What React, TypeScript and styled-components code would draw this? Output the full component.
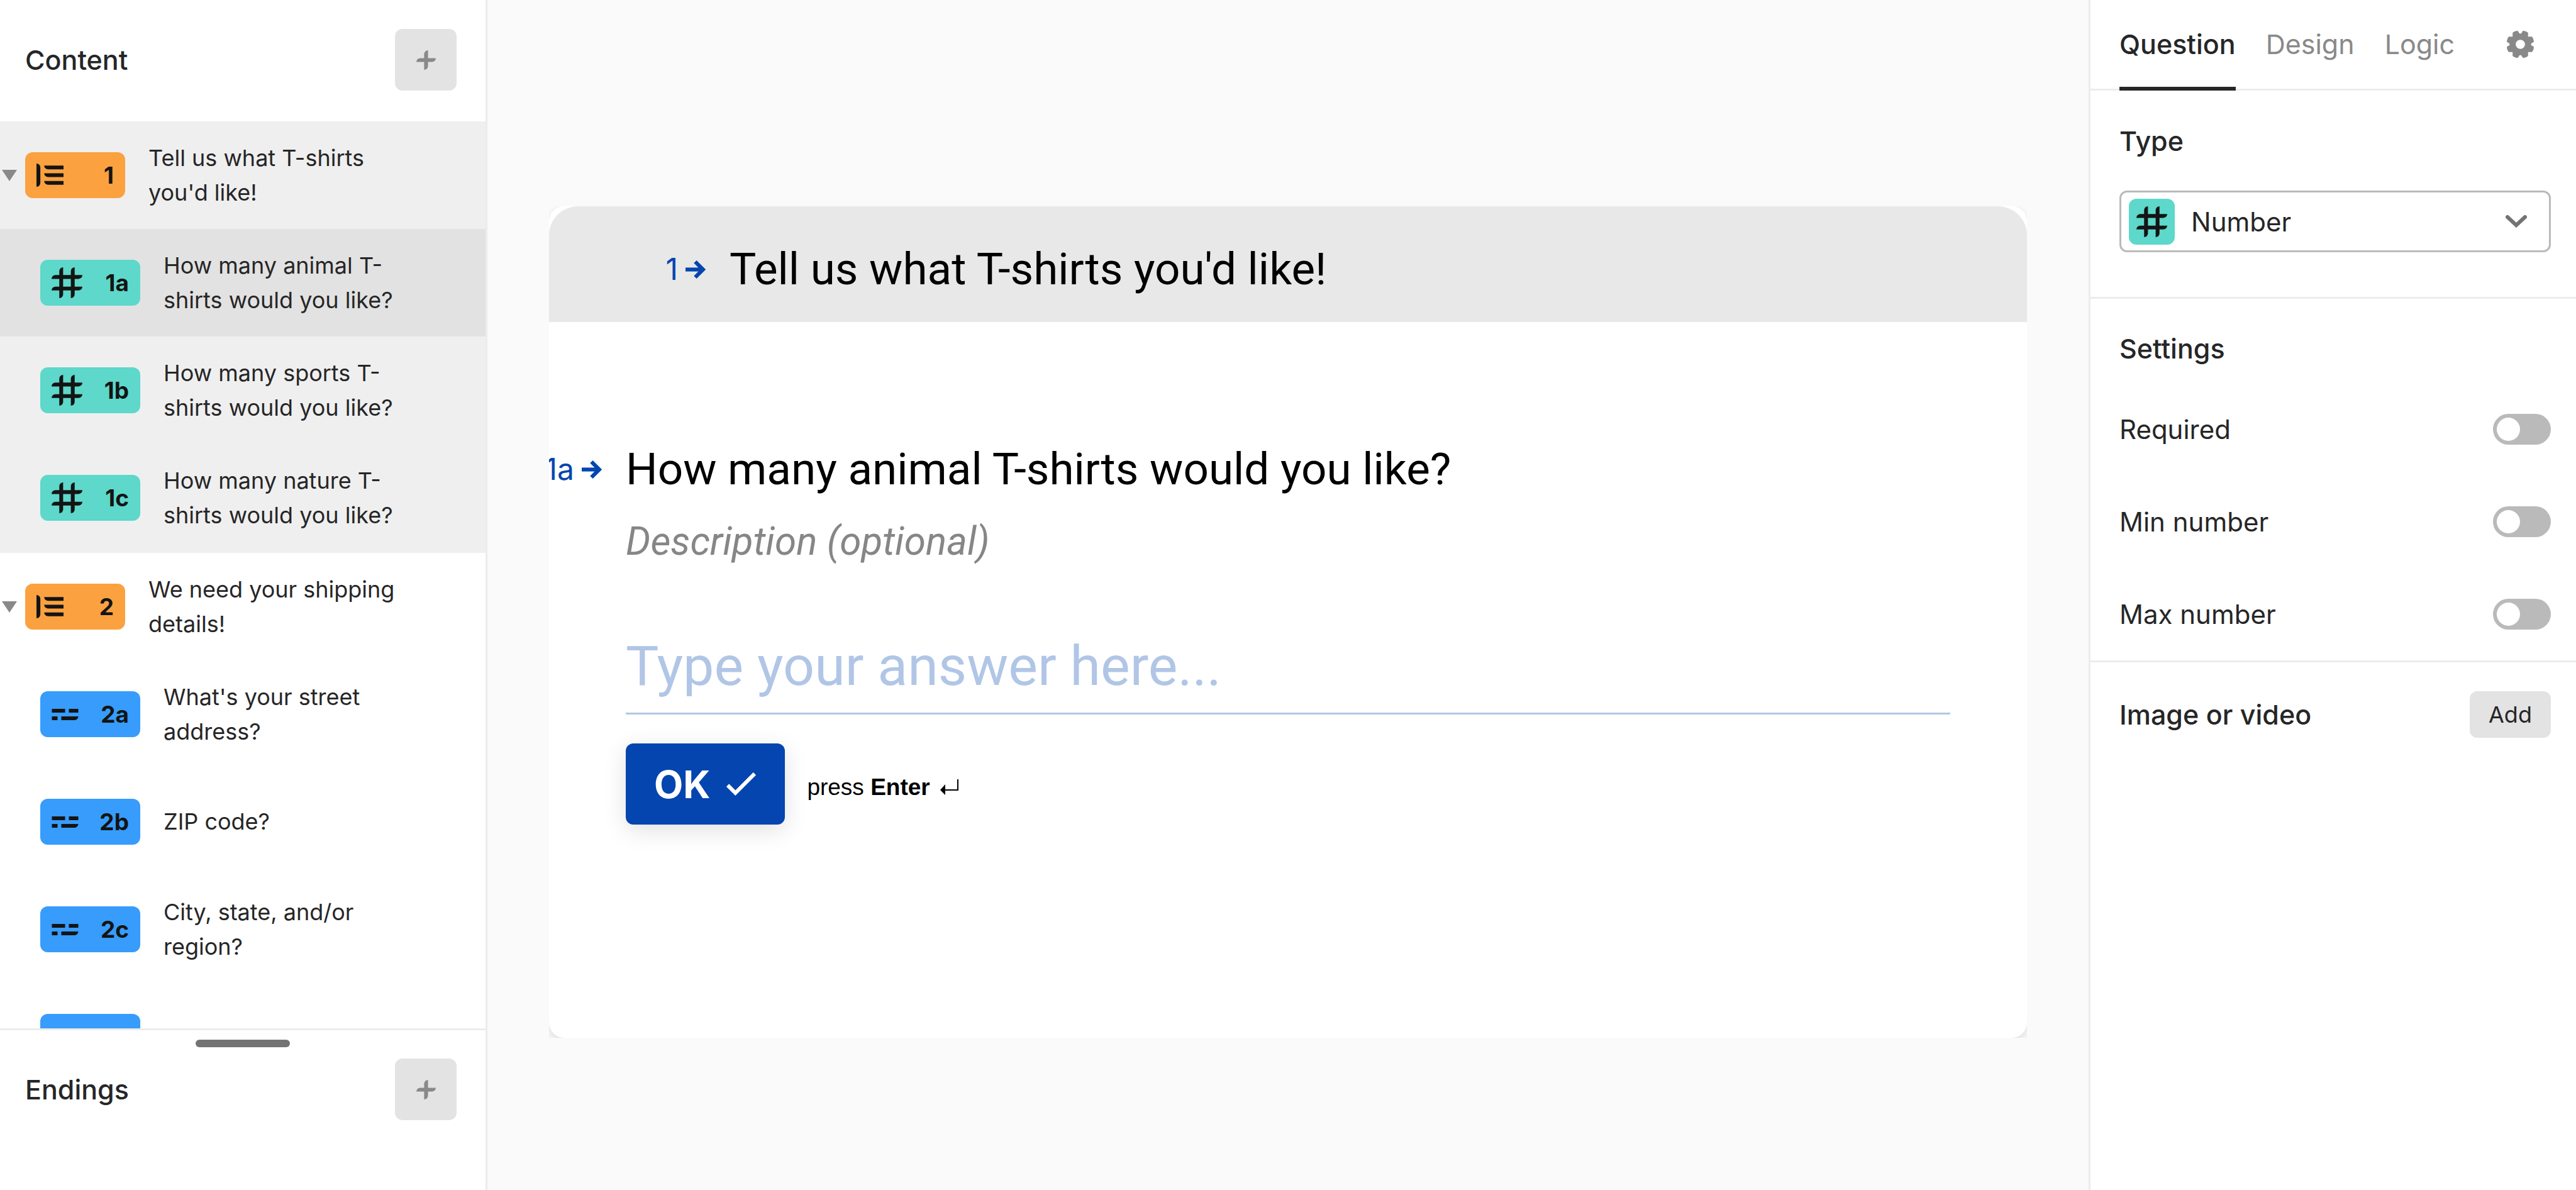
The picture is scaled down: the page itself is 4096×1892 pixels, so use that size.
import React from "react";
import styled, { createGlobalStyle } from "styled-components";

const sans = `Inter, "Liberation Sans", Arial, sans-serif`;
const display = `Roboto, Inter, "Liberation Sans", Arial, sans-serif`;
const ink = "#262627";
const muted = "#898989";
const line = "#ececec";
const brand = "#0445af";

const GlobalStyle = createGlobalStyle`
  *, *::before, *::after { box-sizing: border-box; }
  body { margin: 0; background: #fafafa; color: ${ink}; font-family: ${sans}; }
  button, input, select { font-family: inherit; color: inherit; margin: 0; }
  button { cursor: pointer; }
  h1, h2, h3, p, ul { margin: 0; padding: 0; }
  ul { list-style: none; }
  svg { display: block; flex: none; }
`;

/* ---------- icons ---------- */

const HashIcon = () => (
  <svg width="49" height="49" viewBox="0 0 16 16" fill="#141414" aria-hidden="true">
    <path d="M4 2a2 2 0 0 1 2-2v14a2 2 0 0 1-2 2z" />
    <path d="M10 2a2 2 0 0 1 2-2v14a2 2 0 0 1-2 2z" />
    <path d="M2 4h14a2 2 0 0 1-2 2H0a2 2 0 0 1 2-2z" />
    <path d="M2 10h14a2 2 0 0 1-2 2H0a2 2 0 0 1 2-2z" />
  </svg>
);

const GroupIcon = () => (
  <svg width="43" height="37" viewBox="0 0 14 12" fill="#141414" aria-hidden="true">
    <path d="M0 0a2 2 0 0 1 2 2v8a2 2 0 0 1-2 2z" />
    <path d="M4 1h10v2H6a2 2 0 0 1-2-2zM4 5h10v2H6a2 2 0 0 1-2-2zM4 9h10v2H6a2 2 0 0 1-2-2z" />
  </svg>
);

const ShortTextIcon = () => (
  <svg width="43" height="18" viewBox="0 0 14 6" fill="#141414" aria-hidden="true">
    <path d="M0 0h7v2H0zM9 0h5v2H9zM0 4h3v2H0zM5 4h9a2 2 0 0 1-2 2H5z" />
  </svg>
);

const PlusIcon = () => (
  <svg width="31" height="31" viewBox="0 0 10 10" fill={muted} aria-hidden="true">
    <path d="M4 2a2 2 0 0 1 2-2v8a2 2 0 0 1-2 2z" />
    <path d="M2 4h8a2 2 0 0 1-2 2H0a2 2 0 0 1 2-2z" />
  </svg>
);

const TriangleIcon = () => (
  <svg width="24" height="18" viewBox="0 0 8 6" fill={muted} aria-hidden="true">
    <path d="M0 0h8L4 6z" />
  </svg>
);

const ArrowIcon = () => (
  <svg width="34" height="31" viewBox="0 0 11 10" fill={brand} aria-hidden="true">
    <path d="M7.586 5L4.293 1.707 5.707.293 10.414 5 5.707 9.707 4.293 8.293z" />
    <path d="M8 4v2H0V4z" />
  </svg>
);

const CheckIcon = () => (
  <svg width="49" height="40" viewBox="0 0 16 13" fill="#fff" aria-hidden="true">
    <path d="M14.293.293l1.414 1.414L5 12.414.293 7.707l1.414-1.414L5 9.586z" />
  </svg>
);

const EnterIcon = () => (
  <svg width="29" height="25" viewBox="0 0 29 25" fill="#000" aria-hidden="true">
    <path d="M27 0h2v18H7v-2h20z" />
    <path d="M0 17l8-9v17z" />
  </svg>
);

const ChevronIcon = () => (
  <svg width="34" height="20" viewBox="0 0 34 20" fill="none" stroke="#737373" strokeWidth="6" strokeLinecap="round" aria-hidden="true">
    <path d="M3 3l14 13L31 3" />
  </svg>
);

const GearIcon = () => (
  <svg width="43" height="43" viewBox="-7 -7 14 14" fill={muted} fillRule="evenodd" aria-hidden="true">
    <path d="M0-5.5Q.8-5.6 1-6.6 1.1-7 1.8-7 3.1-6.8 4-6V-4H6Q6.8-3.1 7-1.8 7-1.1 6.6-1 5.6-.8 5.5 0 5.6.8 6.6 1 7 1.1 7 1.8 6.8 3.1 6 4H4V6Q3.1 6.8 1.8 7 1.1 7 1 6.6.8 5.6 0 5.5-.8 5.6-1 6.6-1.1 7-1.8 7-3.1 6.8-4 6V4H-6Q-6.8 3.1-7 1.8-7 1.1-6.6 1-5.6.8-5.5 0-5.6-.8-6.6-1-7-1.1-7-1.8-6.8-3.1-6-4H-4V-6Q-3.1-6.8-1.8-7-1.1-7-1-6.6-.8-5.6 0-5.5ZM0-2.4a2.4 2.4 0 1 0 0 4.8 2.4 2.4 0 0 0 0-4.8Z" />
  </svg>
);

/* ---------- shell ---------- */

const Shell = styled.div`
  display: grid;
  grid-template-columns: 775px minmax(0, 1fr) 775px;
  height: 100vh;
`;

/* ---------- left column ---------- */

const Sidebar = styled.aside`
  display: flex;
  flex-direction: column;
  min-height: 0;
  background: #fff;
  border-right: 3px solid ${line};
`;

const SidebarBar = styled.div`
  display: flex;
  align-items: center;
  justify-content: space-between;
  padding: 0 46px 0 40px;
`;

const SidebarHeader = styled.header`
  padding: 46px 0 49px;
`;

const Heading = styled.h2`
  font-size: 43px;
  line-height: 52px;
  font-weight: 500;
`;

const AddButton = styled.button`
  display: grid;
  place-items: center;
  width: 98px;
  height: 98px;
  padding: 0;
  border: 0;
  border-radius: 12px;
  background: #e3e3e3;
`;

const Outline = styled.div`
  flex: 1;
  min-height: 0;
  overflow: hidden;
`;

const Group = styled.ul<{ $active?: boolean }>`
  padding-bottom: 2px;
  background: ${(p) => (p.$active ? "#efefef" : "#fff")};
`;

const Row = styled.li<{ $nested?: boolean; $selected?: boolean }>`
  display: flex;
  align-items: center;
  gap: 13px;
  height: 171px;
  padding: 0 116px 0 ${(p) => (p.$nested ? 64 : 3)}px;
  background: ${(p) => (p.$selected ? "#e2e2e2" : "transparent")};
`;

const CollapseButton = styled.button`
  flex: none;
  padding: 0;
  border: 0;
  background: none;
`;

const RowButton = styled.button`
  display: flex;
  align-items: center;
  gap: 37px;
  flex: 1;
  min-width: 0;
  padding: 0;
  border: 0;
  background: none;
  text-align: left;
`;

const tones = { group: "#fba140", number: "#5dd8ca", text: "#379cfb" };
type Tone = keyof typeof tones;

const Badge = styled.span<{ $tone: Tone }>`
  display: flex;
  align-items: center;
  justify-content: space-between;
  flex: none;
  width: 159px;
  height: 73px;
  padding: 0 18px;
  border-radius: 12px;
  background: ${(p) => tones[p.$tone]};
  color: #141414;
  font-size: 37px;
  font-weight: 700;
`;

const RowText = styled.span`
  font-size: 36px;
  line-height: 55px;
`;

const SidebarFooter = styled.footer`
  display: flex;
  flex-direction: column;
  gap: 18px;
  padding: 15px 0 111px;
  border-top: 3px solid ${line};
`;

const Handle = styled.div`
  align-self: center;
  width: 150px;
  height: 12px;
  border-radius: 6px;
  background: #737373;
`;

/* ---------- preview ---------- */

const Canvas = styled.main`
  display: flex;
  min-width: 0;
  padding: 328px 98px 242px;
`;

const CardFrame = styled.section`
  display: flex;
  flex: 1;
  min-width: 0;
  overflow: hidden;
`;

const Card = styled.div`
  flex: 1;
  min-width: 0;
  border-radius: 24px;
  background: #fff;
  box-shadow: 0 6px 16px rgba(0, 0, 0, 0.12);
`;

const GroupBanner = styled.header`
  display: grid;
  grid-template-columns: 251px minmax(0, 1fr);
  column-gap: 36px;
  align-items: center;
  height: 184px;
  padding-top: 16px;
  border-radius: 46px 46px 0 0;
  background: #e8e8e8;
`;

const QuestionBody = styled.div`
  display: grid;
  grid-template-columns: 86px minmax(0, 1fr);
  column-gap: 36px;
  padding: 186px 122px 0 0;
`;

const Marker = styled.span`
  display: flex;
  align-items: center;
  justify-content: flex-end;
  gap: 12px;
  color: ${brand};
  font-size: 48px;
  line-height: 96px;
`;

const Title = styled.h1`
  color: #000;
  font-family: ${display};
  font-size: 71px;
  line-height: 96px;
  font-weight: 400;
  white-space: nowrap;
`;

const AnswerForm = styled.form`
  grid-column: 2;
  display: flex;
  flex-direction: column;
`;

const DescriptionInput = styled.input`
  width: 100%;
  height: 80px;
  margin-top: 26px;
  padding: 0;
  border: 0;
  background: none;
  font-family: ${display};
  font-size: 62px;
  font-style: italic;

  &::placeholder { color: #868686; opacity: 1; }
`;

const AnswerInput = styled.input`
  width: 100%;
  height: 137px;
  margin-top: 99px;
  padding: 0 0 16px;
  border: 0;
  border-bottom: 3px solid #b1c6e6;
  background: none;
  font-family: ${display};
  font-size: 88px;

  &::placeholder { color: #b1c6e6; opacity: 1; }
`;

const SubmitRow = styled.div`
  display: flex;
  align-items: center;
  gap: 35px;
  margin-top: 46px;
`;

const OkButton = styled.button`
  display: flex;
  align-items: center;
  justify-content: center;
  gap: 25px;
  height: 129px;
  padding: 0 45px;
  border: 0;
  border-radius: 12px;
  background: ${brand};
  box-shadow: 0 9px 37px rgba(0, 0, 0, 0.12);
  color: #fff;
  font-size: 60px;
  font-weight: 700;
`;

const Hint = styled.p`
  display: flex;
  align-items: center;
  gap: 16px;
  padding-top: 10px;
  color: #000;
  font-family: "Liberation Sans", Arial, sans-serif;
  font-size: 37px;
`;

/* ---------- right column ---------- */

const Panel = styled.aside`
  background: #fff;
  border-left: 3px solid ${line};
`;

const Tabs = styled.nav`
  display: flex;
  align-items: stretch;
  gap: 48px;
  height: 144px;
  padding: 0 67px 0 46px;
  box-shadow: inset 0 -3px ${line};
`;

const Tab = styled.a<{ $active?: boolean }>`
  display: flex;
  align-items: center;
  padding-bottom: 4px;
  box-shadow: ${(p) => (p.$active ? `inset 0 -6px ${ink}` : "none")};
  color: ${(p) => (p.$active ? ink : muted)};
  font-size: 43px;
  font-weight: ${(p) => (p.$active ? 500 : 400)};
  text-decoration: none;
`;

const SettingsButton = styled.button`
  margin-left: auto;
  padding: 0 0 4px;
  border: 0;
  background: none;
`;

const Section = styled.section<{ $top: number; $bottom: number; $last?: boolean }>`
  padding: ${(p) => p.$top}px 40px ${(p) => p.$bottom}px 46px;
  border-bottom: ${(p) => (p.$last ? "0" : `3px solid ${line}`)};
`;

const SelectBox = styled.div`
  display: flex;
  align-items: center;
  gap: 26px;
  height: 98px;
  margin-top: 53px;
  padding: 0 35px 0 12px;
  border: 3px solid #bababa;
  border-radius: 12px;
`;

const TypeSwatch = styled.span`
  display: grid;
  place-items: center;
  width: 73px;
  height: 73px;
  border-radius: 12px;
  background: ${tones.number};
`;

const TypeSelect = styled.select`
  flex: 1;
  height: 92px;
  padding: 0;
  border: 0;
  background: none;
  appearance: none;
  font-size: 42px;
`;

const SwitchList = styled.div`
  margin-top: 29px;
`;

const SwitchRow = styled.label`
  display: flex;
  align-items: center;
  justify-content: space-between;
  height: 147px;
  font-size: 42px;
`;

const Switch = styled.input`
  appearance: none;
  display: flex;
  align-items: center;
  width: 92px;
  height: 49px;
  padding: 0 6px;
  border-radius: 25px;
  background: #bababa;

  &::before {
    content: "";
    width: 37px;
    height: 37px;
    border-radius: 50%;
    background: #fff;
  }

  &:checked { justify-content: flex-end; background: ${ink}; }
`;

const MediaRow = styled.div`
  display: flex;
  align-items: center;
  justify-content: space-between;
`;

const MediaButton = styled.button`
  width: 129px;
  height: 74px;
  padding: 0;
  border: 0;
  border-radius: 12px;
  background: #e3e3e3;
  font-size: 36px;
`;

/* ---------- data ---------- */

type Entry = { no: string; tone: Tone; text: string; selected?: boolean };

const groups: { active?: boolean; entries: Entry[] }[] = [
  {
    active: true,
    entries: [
      { no: "1", tone: "group", text: "Tell us what T-shirts you'd like!" },
      { no: "1a", tone: "number", text: "How many animal T-shirts would you like?", selected: true },
      { no: "1b", tone: "number", text: "How many sports T-shirts would you like?" },
      { no: "1c", tone: "number", text: "How many nature T-shirts would you like?" },
    ],
  },
  {
    entries: [
      { no: "2", tone: "group", text: "We need your shipping details!" },
      { no: "2a", tone: "text", text: "What's your street address?" },
      { no: "2b", tone: "text", text: "ZIP code?" },
      { no: "2c", tone: "text", text: "City, state, and/or region?" },
      { no: "", tone: "text", text: "" },
    ],
  },
];

const icons = { group: GroupIcon, number: HashIcon, text: ShortTextIcon };

const OutlineRow = ({ no, tone, text, selected }: Entry) => {
  const Icon = icons[tone];
  const nested = tone !== "group";
  return (
    <Row $nested={nested} $selected={selected}>
      {!nested && (
        <CollapseButton aria-label="Collapse group">
          <TriangleIcon />
        </CollapseButton>
      )}
      <RowButton>
        <Badge $tone={tone}>
          <Icon />
          {no}
        </Badge>
        <RowText>{text}</RowText>
      </RowButton>
    </Row>
  );
};

export default function App() {
  return (
    <>
      <GlobalStyle />
      <Shell>
        <Sidebar>
          <SidebarHeader>
            <SidebarBar>
              <Heading>Content</Heading>
              <AddButton aria-label="Add content">
                <PlusIcon />
              </AddButton>
            </SidebarBar>
          </SidebarHeader>
          <Outline>
            {groups.map((group, i) => (
              <Group key={i} $active={group.active}>
                {group.entries.map((entry, j) => (
                  <OutlineRow key={j} {...entry} />
                ))}
              </Group>
            ))}
          </Outline>
          <SidebarFooter>
            <Handle />
            <SidebarBar>
              <Heading>Endings</Heading>
              <AddButton aria-label="Add ending">
                <PlusIcon />
              </AddButton>
            </SidebarBar>
          </SidebarFooter>
        </Sidebar>

        <Canvas>
          <CardFrame>
            <Card>
              <GroupBanner>
                <Marker>
                  1<ArrowIcon />
                </Marker>
                <Title>Tell us what T-shirts you'd like!</Title>
              </GroupBanner>
              <QuestionBody>
                <Marker>
                  1a
                  <ArrowIcon />
                </Marker>
                <Title>How many animal T-shirts would you like?</Title>
                <AnswerForm onSubmit={(e) => e.preventDefault()}>
                  <DescriptionInput aria-label="Description" placeholder="Description (optional)" />
                  <AnswerInput aria-label="Answer" placeholder="Type your answer here..." />
                  <SubmitRow>
                    <OkButton type="submit">
                      OK
                      <CheckIcon />
                    </OkButton>
                    <Hint>
                      <span>
                        press <strong>Enter</strong>
                      </span>
                      <EnterIcon />
                    </Hint>
                  </SubmitRow>
                </AnswerForm>
              </QuestionBody>
            </Card>
          </CardFrame>
        </Canvas>

        <Panel>
          <Tabs>
            <Tab href="#question" $active>
              Question
            </Tab>
            <Tab href="#design">Design</Tab>
            <Tab href="#logic">Logic</Tab>
            <SettingsButton aria-label="Settings">
              <GearIcon />
            </SettingsButton>
          </Tabs>
          <Section $top={54} $bottom={71}>
            <Heading as="label" htmlFor="type">
              Type
            </Heading>
            <SelectBox>
              <TypeSwatch>
                <HashIcon />
              </TypeSwatch>
              <TypeSelect id="type">
                <option>Number</option>
              </TypeSelect>
              <ChevronIcon />
            </SelectBox>
          </Section>
          <Section $top={53} $bottom={0}>
            <Heading>Settings</Heading>
            <SwitchList>
              {["Required", "Min number", "Max number"].map((name) => (
                <SwitchRow key={name}>
                  {name}
                  <Switch type="checkbox" />
                </SwitchRow>
              ))}
            </SwitchList>
          </Section>
          <Section $top={46} $bottom={0} $last>
            <MediaRow>
              <Heading>Image or video</Heading>
              <MediaButton>Add</MediaButton>
            </MediaRow>
          </Section>
        </Panel>
      </Shell>
    </>
  );
}
